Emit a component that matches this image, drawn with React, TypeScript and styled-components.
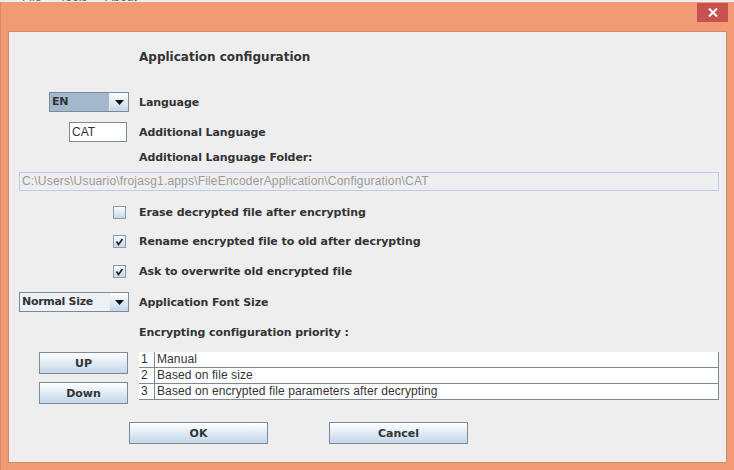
import React from 'react';
import styled, { createGlobalStyle } from 'styled-components';

const Global = createGlobalStyle`
  html, body { margin: 0; padding: 0; background: #eceef0; }
  body { width: 734px; height: 470px; overflow: hidden; font-family: "DejaVu Sans", sans-serif; }
  * { box-sizing: border-box; }
`;

const Backdrop = styled.div`
  height: 2px;
  overflow: hidden;
  background: #eceef0;
  display: flex;
  gap: 18px;
  padding-left: 22px;
  font-family: "Liberation Sans", Arial, sans-serif;
  font-size: 12px;
  color: #666;
  line-height: 10px;
  & > span { margin-top: -8px; }
`;

const Window = styled.div`
  height: 468px;
  background: #f29a74;
  border-left: 1px solid #d98a68;
  display: flex;
  flex-direction: column;
`;

const TitleBar = styled.div`
  height: 29px;
  display: flex;
  justify-content: flex-end;
  align-items: flex-start;
  padding: 1px 6px 0 0;
`;

const CloseButton = styled.div`
  width: 31px;
  height: 19px;
  background: #c75050;
  display: flex;
  align-items: center;
  justify-content: center;
`;

const Content = styled.div`
  flex: 1;
  margin: 0 7px 7px 7px;
  background: #eeeeee;
  border: 1px solid #cf8a6c;
  display: flex;
  flex-direction: column;
  padding-top: 15px;
  color: #333333;
`;

const Title = styled.div`
  height: 20px;
  line-height: 20px;
  padding-left: 130px;
  font-weight: bold;
  font-size: 12px;
`;

const Row = styled.div<{ $mt: number; $h?: number }>`
  margin-top: ${(p) => p.$mt}px;
  height: ${(p) => p.$h ?? 20}px;
  display: grid;
  grid-template-columns: 120px 1fr;
  column-gap: 10px;
  align-items: center;
`;

const Label = styled.div`
  grid-column: 2;
  font-weight: bold;
  font-size: 11px;
  letter-spacing: -0.08px;
  white-space: nowrap;
`;

const Combo = styled.div<{ $w: number; $selected?: boolean }>`
  justify-self: end;
  width: ${(p) => p.$w}px;
  height: 20px;
  border: 1px solid #7a8a99;
  display: flex;
  background: ${(p) => (p.$selected ? '#a3b8cc' : '#eef1f5')};
`;

const ComboText = styled.div`
  flex: 1;
  padding-left: 2px;
  font-weight: bold;
  font-size: 11px;
  letter-spacing: -0.3px;
  line-height: 18px;
  color: #333;
  white-space: nowrap;
`;

const ComboArrow = styled.div`
  width: 19px;
  height: 18px;
  border-left: 1px solid #e8eef5;
  background: linear-gradient(#fbfcfe, #dfe8f2 55%, #c3d5e8);
  display: flex;
  align-items: center;
  justify-content: center;
`;

const TextField = styled.div`
  justify-self: end;
  margin-right: 2px;
  width: 58px;
  height: 20px;
  background: #ffffff;
  border: 1px solid #7a8a99;
  padding-left: 2px;
  font-family: "Liberation Sans", Arial, sans-serif;
  font-size: 12px;
  line-height: 18px;
  color: #333;
`;

const PathField = styled.div`
  margin: 5px 7px 0 10px;
  height: 19px;
  border: 1px solid #b8cfe5;
  background: #eeeeee;
  padding-left: 2px;
  font-family: "Liberation Sans", Arial, sans-serif;
  font-size: 12px;
  letter-spacing: 0.18px;
  line-height: 17px;
  color: #9a9a9a;
  white-space: nowrap;
  overflow: hidden;
`;

const CheckBox = styled.div`
  justify-self: end;
  margin-right: 3px;
  width: 13px;
  height: 13px;
  border: 1px solid #8a9bb0;
  background: linear-gradient(#fbfcfe, #dae5f0 60%, #c8d8e8);
  display: flex;
  align-items: center;
  justify-content: center;
`;

const PriorityArea = styled.div`
  margin-top: 10px;
  display: grid;
  grid-template-columns: 120px 580px;
  column-gap: 10px;
  align-items: start;
`;

const SideButtons = styled.div`
  justify-self: end;
  margin-right: 1px;
  display: flex;
  flex-direction: column;
  gap: 8px;
`;

const Button = styled.div<{ $w: number }>`
  width: ${(p) => p.$w}px;
  height: 22px;
  border: 1px solid #7a8a99;
  background: linear-gradient(#ffffff, #e3ecf5 45%, #c4d7ea);
  display: flex;
  align-items: center;
  justify-content: center;
  font-weight: bold;
  font-size: 11px;
  color: #333;
`;

const Table = styled.div`
  background: #ffffff;
  border-right: 1px solid #7a8a99;
  font-family: "Liberation Sans", Arial, sans-serif;
  font-size: 12px;
  letter-spacing: 0.1px;
  color: #333;
`;

const TableRow = styled.div`
  height: 16px;
  border-bottom: 1px solid #7a8a99;
  display: flex;
`;

const NumCell = styled.div`
  width: 16px;
  border-right: 1px solid #7a8a99;
  padding-left: 2px;
  line-height: 15px;
`;

const TextCell = styled.div`
  flex: 1;
  padding-left: 2px;
  line-height: 15px;
  white-space: nowrap;
`;

const ButtonRow = styled.div`
  margin-top: 18px;
  padding-left: 120px;
  display: flex;
  gap: 61px;
`;

const Arrow = () => (
  <svg width="9" height="5" viewBox="0 0 9 5">
    <path d="M0 0 H9 L4.5 5 Z" fill="#111" />
  </svg>
);

const Check = () => (
  <svg width="11" height="11" viewBox="0 0 11 11">
    <path d="M2.5 5.5 L4.5 8.5 L8.5 3" stroke="#222" strokeWidth="1.6" fill="none" />
  </svg>
);

const rows = ['Manual', 'Based on file size', 'Based on encrypted file parameters after decrypting'];

export default function App() {
  return (
    <>
      <Global />
      <Backdrop>
        <span>File</span>
        <span>Tools</span>
        <span>About</span>
      </Backdrop>
      <Window>
        <TitleBar>
          <CloseButton>
            <svg width="10" height="9" viewBox="0 0 10 9">
              <path d="M1 0.5 L9 8.5 M9 0.5 L1 8.5" stroke="#fff" strokeWidth="2" />
            </svg>
          </CloseButton>
        </TitleBar>
        <Content>
          <Title>Application configuration</Title>
          <Row $mt={25}>
            <Combo $w={80} $selected>
              <ComboText>EN</ComboText>
              <ComboArrow><Arrow /></ComboArrow>
            </Combo>
            <Label>Language</Label>
          </Row>
          <Row $mt={10}>
            <TextField>CAT</TextField>
            <Label>Additional Language</Label>
          </Row>
          <Row $mt={5}>
            <Label>Additional Language Folder:</Label>
          </Row>
          <PathField>C:\Users\Usuario\frojasg1.apps\FileEncoderApplication\Configuration\CAT</PathField>
          <Row $mt={12} $h={19}>
            <CheckBox />
            <Label>Erase decrypted file after encrypting</Label>
          </Row>
          <Row $mt={10} $h={19}>
            <CheckBox><Check /></CheckBox>
            <Label>Rename encrypted file to old after decrypting</Label>
          </Row>
          <Row $mt={11} $h={19}>
            <CheckBox><Check /></CheckBox>
            <Label>Ask to overwrite old encrypted file</Label>
          </Row>
          <Row $mt={11}>
            <Combo $w={110}>
              <ComboText>Normal Size</ComboText>
              <ComboArrow><Arrow /></ComboArrow>
            </Combo>
            <Label>Application Font Size</Label>
          </Row>
          <Row $mt={10}>
            <Label>Encrypting configuration priority :</Label>
          </Row>
          <PriorityArea>
            <SideButtons>
              <Button $w={89}>UP</Button>
              <Button $w={89}>Down</Button>
            </SideButtons>
            <Table>
              {rows.map((r, i) => (
                <TableRow key={r}>
                  <NumCell>{i + 1}</NumCell>
                  <TextCell>{r}</TextCell>
                </TableRow>
              ))}
            </Table>
          </PriorityArea>
          <ButtonRow>
            <Button $w={139}>OK</Button>
            <Button $w={139}>Cancel</Button>
          </ButtonRow>
        </Content>
      </Window>
    </>
  );
}
